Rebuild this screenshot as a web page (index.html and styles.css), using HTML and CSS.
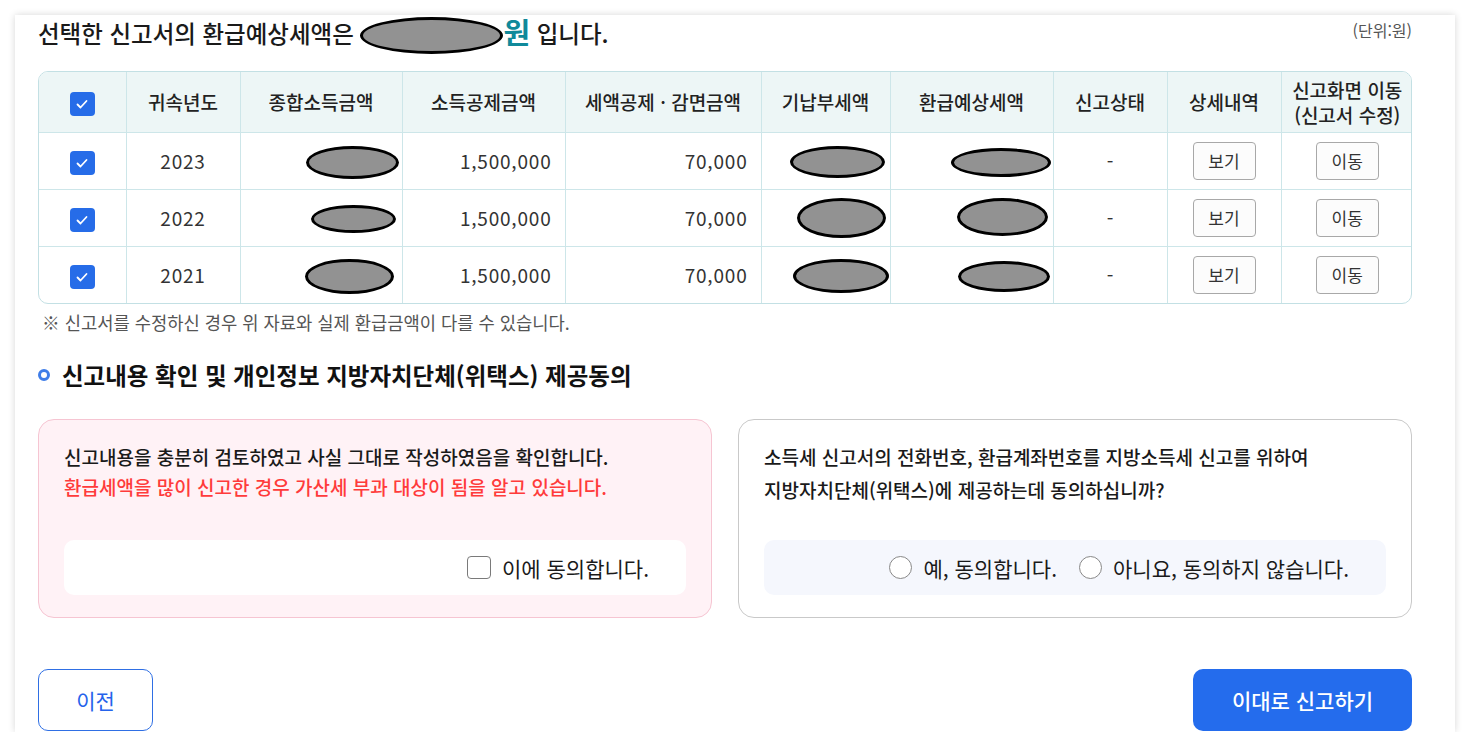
FILE: index.html
```html
<!DOCTYPE html>
<html lang="ko">
<head>
<meta charset="utf-8">
<title>신고서 환급예상세액</title>
<link rel="stylesheet" href="styles.css">
</head>
<body>
<div class="card">
  <div class="summary">
    <h2 class="summary-title">선택한 신고서의 환급예상세액은 <span class="blot blot-total"></span><strong class="won">원</strong> 입니다.</h2>
    <span class="unit">(단위:원)</span>
  </div>

  <div class="table-wrap">
    <table class="report">
      <colgroup>
        <col class="w1"><col class="w2"><col class="w3"><col class="w4"><col class="w5">
        <col class="w6"><col class="w7"><col class="w8"><col class="w9"><col class="w10">
      </colgroup>
      <thead>
        <tr>
          <th><span class="check"><svg viewBox="0 0 24 24" width="24" height="24"><path d="M7.5 12.5l3 3 6-6.5" fill="none" stroke="#fff" stroke-width="1.8" stroke-linecap="round" stroke-linejoin="round"/></svg></span></th>
          <th>귀속년도</th>
          <th>종합소득금액</th>
          <th>소득공제금액</th>
          <th>세액공제 · 감면금액</th>
          <th>기납부세액</th>
          <th>환급예상세액</th>
          <th>신고상태</th>
          <th>상세내역</th>
          <th>신고화면 이동<br>(신고서 수정)</th>
        </tr>
      </thead>
      <tbody>
        <tr>
          <td><span class="check"><svg viewBox="0 0 24 24" width="24" height="24"><path d="M7.5 12.5l3 3 6-6.5" fill="none" stroke="#fff" stroke-width="1.8" stroke-linecap="round" stroke-linejoin="round"/></svg></span></td>
          <td class="digits">2023</td>
          <td class="blot-cell"><span class="blot b11"></span></td>
          <td class="num digits">1,500,000</td>
          <td class="num digits">70,000</td>
          <td class="blot-cell"><span class="blot b12"></span></td>
          <td class="blot-cell"><span class="blot b13"></span></td>
          <td>-</td>
          <td><button class="mini">보기</button></td>
          <td><button class="mini">이동</button></td>
        </tr>
        <tr>
          <td><span class="check"><svg viewBox="0 0 24 24" width="24" height="24"><path d="M7.5 12.5l3 3 6-6.5" fill="none" stroke="#fff" stroke-width="1.8" stroke-linecap="round" stroke-linejoin="round"/></svg></span></td>
          <td class="digits">2022</td>
          <td class="blot-cell"><span class="blot b21"></span></td>
          <td class="num digits">1,500,000</td>
          <td class="num digits">70,000</td>
          <td class="blot-cell"><span class="blot b22"></span></td>
          <td class="blot-cell"><span class="blot b23"></span></td>
          <td>-</td>
          <td><button class="mini">보기</button></td>
          <td><button class="mini">이동</button></td>
        </tr>
        <tr>
          <td><span class="check"><svg viewBox="0 0 24 24" width="24" height="24"><path d="M7.5 12.5l3 3 6-6.5" fill="none" stroke="#fff" stroke-width="1.8" stroke-linecap="round" stroke-linejoin="round"/></svg></span></td>
          <td class="digits">2021</td>
          <td class="blot-cell"><span class="blot b31"></span></td>
          <td class="num digits">1,500,000</td>
          <td class="num digits">70,000</td>
          <td class="blot-cell"><span class="blot b32"></span></td>
          <td class="blot-cell"><span class="blot b33"></span></td>
          <td>-</td>
          <td><button class="mini">보기</button></td>
          <td><button class="mini">이동</button></td>
        </tr>
      </tbody>
    </table>
  </div>

  <p class="note">※ 신고서를 수정하신 경우 위 자료와 실제 환급금액이 다를 수 있습니다.</p>

  <h3 class="section-title"><span class="bullet"></span>신고내용 확인 및 개인정보 지방자치단체(위택스) 제공동의</h3>

  <div class="agree-grid">
    <div class="agree-box pink">
      <div class="agree-text">
        <p>신고내용을 충분히 검토하였고 사실 그대로 작성하였음을 확인합니다.</p>
        <p class="warn">환급세액을 많이 신고한 경우 가산세 부과 대상이 됨을 알고 있습니다.</p>
      </div>
      <div class="choice">
        <label class="opt"><span class="box"></span>이에 동의합니다.</label>
      </div>
    </div>
    <div class="agree-box consent">
      <div class="agree-text">
        <p>소득세 신고서의 전화번호, 환급계좌번호를 지방소득세 신고를 위하여</p>
        <p>지방자치단체(위택스)에 제공하는데 동의하십니까?</p>
      </div>
      <div class="choice tint">
        <label class="opt"><span class="radio"></span>예, 동의합니다.</label>
        <label class="opt"><span class="radio"></span>아니요, 동의하지 않습니다.</label>
      </div>
    </div>
  </div>

  <div class="actions">
    <button class="btn btn-prev">이전</button>
    <button class="btn btn-submit">이대로 신고하기</button>
  </div>
</div>
</body>
</html>
```

FILE: styles.css
```css
* { box-sizing: border-box; }

body {
  margin: 0;
  background: #fff;
  font-family: "Noto Sans CJK KR", "Noto Sans", sans-serif;
  color: #222;
}

.card {
  margin: 15px 15px 0;
  width: 1440px;
  height: 717px;
  background: #fff;
  box-shadow: 0 0 7px rgba(0, 0, 0, 0.16);
  padding: 0 43px 1px 23px;
  display: flex;
  flex-direction: column;
}

.summary {
  display: flex;
  justify-content: space-between;
  height: 40px;
}

.summary-title {
  margin: -4px 0 0;
  font-size: 23.5px;
  font-weight: 500;
  line-height: 40px;
  color: #1a1a1a;
  white-space: nowrap;
}

.blot {
  display: inline-block;
  background: #929292;
  border: 3px solid #000;
  border-radius: 50%;
  vertical-align: middle;
}

.blot-total { width: 143px; height: 37px; margin-top: -3px; }

.won {
  color: #10899a;
  font-size: 29px;
  font-weight: 700;
  vertical-align: -1px;
}

.unit {
  font-size: 16px;
  color: #555;
  line-height: 16px;
  margin-top: 7px;
}

.table-wrap {
  margin-top: 16px;
  border: 1px solid #c3e0e4;
  border-radius: 10px;
  overflow: hidden;
}

.report {
  width: 100%;
  border-collapse: collapse;
  border-style: hidden;
  table-layout: fixed;
}

.w1 { width: 87px; }
.w2 { width: 114px; }
.w3 { width: 162px; }
.w4 { width: 163px; }
.w5 { width: 196px; }
.w6 { width: 129px; }
.w7 { width: 163px; }
.w8 { width: 114px; }
.w9 { width: 114px; }
.w10 { width: 132px; }

.report th,
.report td {
  border: 1px solid #cde6e9;
  padding: 0;
}

.report th {
  background: #edf6f6;
  height: 60px;
  font-size: 19px;
  font-weight: 500;
  line-height: 25px;
  color: #222;
}

.report td {
  height: 57px;
  font-size: 19px;
  text-align: center;
  color: #333;
}

.report td.digits {
  letter-spacing: 0.8px;
}

.report td.num {
  text-align: right;
  padding-right: 13px;
}

.report td.blot-cell {
  text-align: left;
}

.check {
  display: inline-flex;
  width: 25px;
  height: 24px;
  border-radius: 4px;
  background: #266ce8;
  vertical-align: middle;
  align-items: center;
  justify-content: center;
}

.b11 { width: 93px; height: 33px; margin: 4px 0 0 65px; }
.b21 { width: 85px; height: 28px; margin: 1px 0 0 70px; }
.b31 { width: 89px; height: 35px; margin: 3px 0 0 64px; }
.b12 { width: 95px; height: 32px; margin: 2px 0 0 28px; }
.b22 { width: 89px; height: 40px; margin: 1px 0 0 35px; }
.b32 { width: 96px; height: 34px; margin: 3px 0 0 31px; }
.b13 { width: 100px; height: 29px; margin: 3px 0 0 60px; }
.b23 { width: 91px; height: 38px; margin: -1px 0 0 66px; }
.b33 { width: 92px; height: 31px; margin: 3px 0 0 67px; }

.mini {
  width: 63px;
  height: 38px;
  border: 1px solid #a8a8a8;
  border-radius: 4px;
  background: #fcfcfc;
  font-family: inherit;
  font-size: 17px;
  color: #333;
  padding: 0;
}

.note {
  margin: 7px 0 0 4px;
  font-size: 17.7px;
  line-height: 22px;
  color: #555;
}

.section-title {
  margin: 27px 0 0;
  display: flex;
  align-items: center;
  gap: 12px;
  font-size: 23.5px;
  font-weight: 700;
  line-height: 30px;
  color: #111;
}

.bullet {
  width: 12px;
  height: 12px;
  border: 3px solid #3f7de8;
  border-radius: 50%;
}

.agree-grid {
  margin-top: 29px;
  display: grid;
  grid-template-columns: 1fr 1fr;
  gap: 26px;
  height: 199px;
}

.agree-box {
  border: 1px solid #c9c9c9;
  border-radius: 16px;
  padding: 22px 25px 22px;
  display: flex;
  flex-direction: column;
  background: #fff;
}

.agree-box.pink {
  background: #fff2f6;
  border-color: #f6c5d2;
}

.agree-text p {
  margin: 0;
  font-size: 19px;
  font-weight: 500;
  line-height: 30px;
  color: #1a1a1a;
}

.agree-text .warn { color: #ff3b3b; }

.consent { padding-top: 20px; }
.consent .agree-text p { line-height: 33px; }

.choice {
  margin-top: auto;
  height: 55px;
  border-radius: 10px;
  background: #fff;
  display: flex;
  align-items: center;
  justify-content: flex-end;
  gap: 22px;
  padding-right: 37px;
  font-size: 21px;
  color: #1a1a1a;
}

.choice.tint { background: #f5f7fd; }

.opt {
  display: flex;
  align-items: center;
  gap: 11px;
}

.box {
  width: 24px;
  height: 23px;
  border: 1px solid #7a7a7a;
  border-radius: 4px;
  background: #fff;
}

.radio {
  width: 23px;
  height: 23px;
  border: 1px solid #888;
  border-radius: 50%;
  background: #fff;
}

.actions {
  margin-top: auto;
  display: flex;
  justify-content: space-between;
}

.btn {
  height: 62px;
  border-radius: 10px;
  font-family: inherit;
  font-size: 21px;
  cursor: pointer;
}

.btn-prev {
  width: 115px;
  border: 1px solid #2f6fe4;
  background: #fff;
  color: #2563eb;
}

.btn-submit {
  width: 219px;
  border: none;
  background: #246ced;
  color: #fff;
  font-weight: 500;
}
```
